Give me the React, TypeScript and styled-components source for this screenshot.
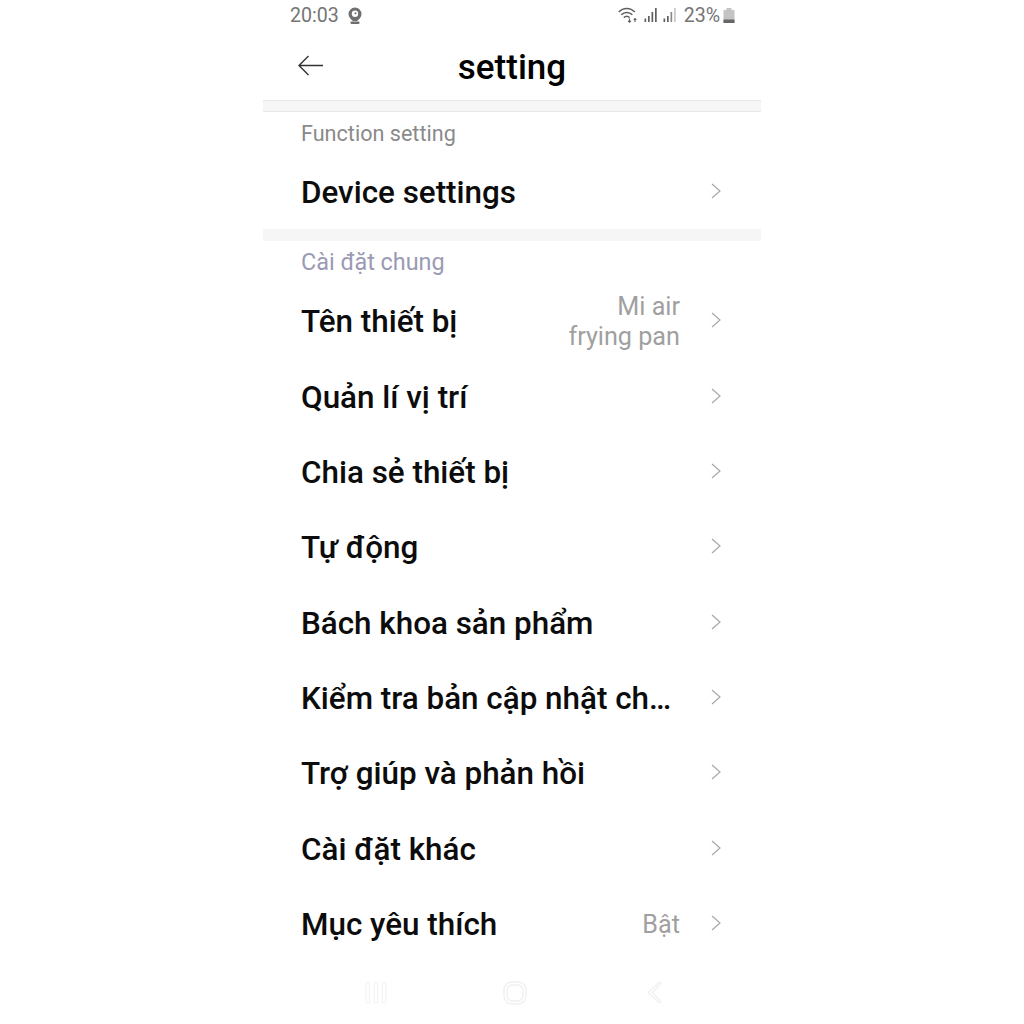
import { createGlobalStyle, styled } from "styled-components";

const GlobalStyle = createGlobalStyle`
  html, body {
    margin: 0;
    padding: 0;
    background: #fff;
    font-family: Roboto, "Noto Sans", sans-serif;
  }
`;

const Phone = styled.div`
  width: 498px;
  height: 1024px;
  margin: 0 auto;
  position: relative;
  display: flex;
  flex-direction: column;
  background: #fff;
`;

const StatusBar = styled.div`
  height: 32px;
  padding: 0 26px 2px 27px;
  box-sizing: border-box;
  display: flex;
  align-items: center;
  justify-content: space-between;
  color: #757575;
  font-size: 19.6px;
`;

const StatusGroup = styled.div<{ $gap: number }>`
  display: flex;
  align-items: center;
  gap: ${(p) => p.$gap}px;
`;

const Percent = styled.span`
  margin-left: 2px;
`;

const Header = styled.header`
  height: 68px;
  padding-top: 2px;
  box-sizing: border-box;
  display: flex;
  align-items: center;
  justify-content: center;
  position: relative;
`;

const BackButton = styled.div`
  position: absolute;
  left: 35px;
  top: 23px;
  display: flex;
`;

const Title = styled.h1`
  margin: 0;
  font-size: 35px;
  font-weight: 500;
  color: #000;
`;

const HeaderDivider = styled.div`
  height: 10px;
  background: #f6f6f6;
  border-top: 1px solid #e6e6e6;
  border-bottom: 1px solid #e6e6e6;
`;

const SectionLabel = styled.div<{ $tone: string; $size: number; $leading: number }>`
  height: 36px;
  padding-left: 38px;
  display: flex;
  align-items: flex-end;
  font-size: ${(p) => p.$size}px;
  line-height: ${(p) => p.$leading}px;
  color: ${(p) => p.$tone};
`;

const Band = styled.div`
  height: 12px;
  flex: none;
  background: #f6f6f6;
`;

const RowList = styled.div`
  padding-top: 6px;
  display: flex;
  flex-direction: column;
`;

const Row = styled.div`
  height: 75.3px;
  flex: none;
  display: flex;
  align-items: center;
  padding: 0 40px 0 38px;
`;

const RowTitle = styled.div`
  flex: 1;
  padding-top: 2px;
  font-size: 31.4px;
  font-weight: 500;
  color: #0c0c0c;
  white-space: nowrap;
`;

const RowValue = styled.div`
  padding-top: 3px;
  font-size: 25.2px;
  line-height: 30px;
  color: #a0a0a0;
  text-align: right;
  margin-left: 12px;
`;

const Chevron = styled.svg`
  width: 10px;
  height: 16px;
  margin-left: 31px;
  margin-top: -1px;
  flex: none;
`;

const NavBar = styled.nav`
  position: absolute;
  left: 0;
  right: 0;
  bottom: 20px;
  height: 23px;
  display: flex;
  align-items: center;
  justify-content: space-between;
  padding: 0 99px 0 102px;
`;

const HomeKey = styled.svg`
  width: 24px;
  height: 24px;
  margin-right: 4px;
`;

const Arrow = () => (
  <Chevron viewBox="0 0 10 16" fill="none" stroke="#a8a8a8" strokeWidth="1.200">
    <path d="M1 1 L9 8 L1 15" />
  </Chevron>
);

const settingRows = [
  { title: "Tên thiết bị", value: ["Mi air", "frying pan"] },
  { title: "Quản lí vị trí" },
  { title: "Chia sẻ thiết bị" },
  { title: "Tự động" },
  { title: "Bách khoa sản phẩm" },
  { title: "Kiểm tra bản cập nhật ch…" },
  { title: "Trợ giúp và phản hồi" },
  { title: "Cài đặt khác" },
  { title: "Mục yêu thích", value: ["Bật"] },
];

export default function App() {
  return (
    <Phone>
      <GlobalStyle />
      <StatusBar>
        <StatusGroup $gap={9}>
          <span>20:03</span>
          <svg width="14" height="17" viewBox="0 0 14 17">
            <path
              d="M7 0.500a6.500 6.500 0 0 1 6.500 6.500c0 3-2.500 5.500-4.500 7H5c-2-1.500-4.500-4-4.500-7A6.500 6.500 0 0 1 7 0.500z"
              fill="#6f6f6f"
            />
            <circle cx="7" cy="6.800" r="3.200" fill="#fff" />
            <circle cx="7.500" cy="6.300" r="1" fill="#6f6f6f" />
            <rect x="2.500" y="14.500" width="9" height="2.500" rx="1" fill="#6f6f6f" />
          </svg>
        </StatusGroup>
        <StatusGroup $gap={5}>
          <svg width="21" height="16" viewBox="0 0 21 16" fill="none" stroke="#5f5f5f" strokeWidth="1.500">
            <path d="M0.700 5c4.500-4.800 11.600-4.800 16.100 0" />
            <path d="M3.200 7.800c3.200-3.200 8-3.200 11.200 0" />
            <path d="M5.800 10.600c1.800-1.700 4-1.700 5.800 0" />
            <path d="M11.500 11.500v3.500M10 13.800l1.500 1.400 1.500-1.400" strokeWidth="1.100" />
            <path d="M17 15v-3.500M15.700 12.800l1.300-1.300 1.300 1.300" strokeWidth="1.100" />
          </svg>
          <svg width="14" height="16" viewBox="0 0 14 16" fill="#5f5f5f">
            <rect x="0.500" y="11.500" width="1.700" height="3.500" />
            <rect x="4" y="9" width="1.700" height="6" />
            <rect x="7.500" y="5" width="1.700" height="10" />
            <rect x="11" y="1" width="1.700" height="14" />
          </svg>
          <svg width="14" height="16" viewBox="0 0 14 16" fill="#5f5f5f">
            <rect x="0.500" y="11.500" width="1.700" height="3.500" />
            <rect x="4" y="9" width="1.700" height="6" />
            <rect x="7.500" y="5" width="1.700" height="10" fill="#8a8a8a" />
            <rect x="11" y="1" width="1.700" height="14" fill="#c8c8c8" />
          </svg>
          <Percent>23%</Percent>
          <svg width="12" height="15" viewBox="0 0 12 15" style={{ marginLeft: -2 }}>
            <rect x="3.500" y="0" width="5" height="2" fill="#c4c4c4" />
            <rect x="0.500" y="2" width="11" height="13" fill="#c4c4c4" />
            <rect x="0.500" y="11.500" width="11" height="3.500" fill="#666" />
          </svg>
        </StatusGroup>
      </StatusBar>
      <Header>
        <BackButton>
          <svg width="25" height="21" viewBox="0 0 25 21" fill="none" stroke="#333" strokeWidth="1.400">
            <path d="M25 10.500H1M10.500 1L1 10.500l9.500 9.500" />
          </svg>
        </BackButton>
        <Title>setting</Title>
      </Header>
      <HeaderDivider />
      <SectionLabel $tone="#8a8a8a" $size={21.6} $leading={28}>
        Function setting
      </SectionLabel>
      <RowList>
        <Row>
          <RowTitle>Device settings</RowTitle>
          <Arrow />
        </Row>
      </RowList>
      <Band />
      <SectionLabel $tone="#9a9ab4" $size={23.4} $leading={30}>
        Cài đặt chung
      </SectionLabel>
      <RowList>
        {settingRows.map((row) => (
          <Row key={row.title}>
            <RowTitle>{row.title}</RowTitle>
            {row.value && (
              <RowValue>
                {row.value.map((line) => (
                  <div key={line}>{line}</div>
                ))}
              </RowValue>
            )}
            <Arrow />
          </Row>
        ))}
      </RowList>
      <NavBar>
        <svg width="22" height="23" viewBox="0 0 22 23" fill="none" stroke="#f3f3f3" strokeWidth="1.200">
          <rect x="1" y="1" width="3.500" height="21" rx="1.700" />
          <rect x="9.200" y="1" width="3.500" height="21" rx="1.700" />
          <rect x="17.400" y="1" width="3.500" height="21" rx="1.700" />
        </svg>
        <HomeKey viewBox="0 0 24 24" fill="none" stroke="#f0f0f0" strokeWidth="1.400">
          <rect x="1" y="1" width="22" height="22" rx="8" />
          <rect x="4" y="4" width="16" height="16" rx="5.500" />
        </HomeKey>
        <svg width="15" height="23" viewBox="0 0 15 23" fill="none" stroke="#f0f0f0" strokeWidth="1.200">
          <path d="M12.500 1L14 2.500 5 11.500l9 9-1.500 1.500L1 11.500z" />
        </svg>
      </NavBar>
    </Phone>
  );
}
